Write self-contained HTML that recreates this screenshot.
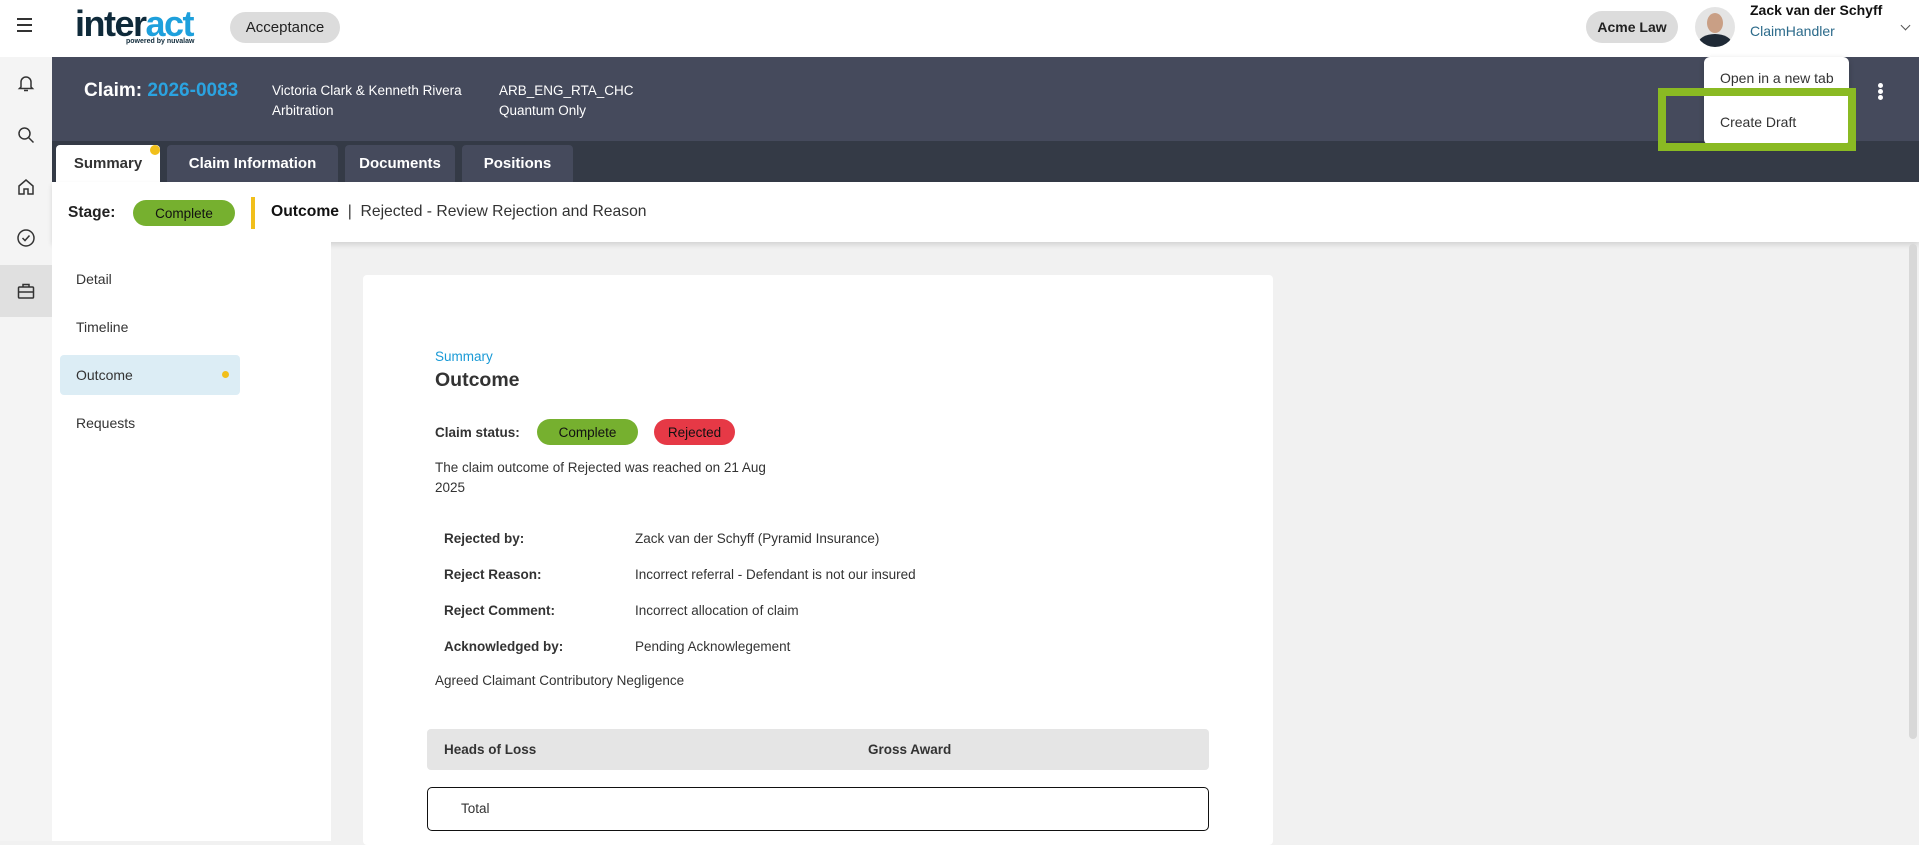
<!DOCTYPE html>
<html><head><meta charset="utf-8"><style>
*{box-sizing:border-box;margin:0;padding:0}
body{width:1919px;height:841px;overflow:hidden;font-family:"Liberation Sans",sans-serif;background:#f1f1f1;position:relative;color:#222}
.a{position:absolute;white-space:nowrap}
.pill{position:absolute;border-radius:16px;display:flex;align-items:center;justify-content:center}
</style></head><body>
<!-- top bar -->
<div class="a" style="left:0;top:0;width:1919px;height:57px;background:#fff"></div>
<div class="a" style="left:17px;top:18px;width:15px;height:14px;border-top:2px solid #333;border-bottom:2px solid #333"><div style="margin-top:4px;height:2px;background:#333"></div></div>
<div class="a" style="left:75px;top:3px;font-size:36px;font-weight:bold;letter-spacing:-1.5px;color:#0f2a3a">inter<span style="color:#1ea0dc">act</span></div>
<div class="a" style="left:126px;top:38px;font-size:7px;font-weight:bold;color:#0f2a3a">powered by nuvalaw</div>
<div class="pill" style="left:230px;top:12px;width:110px;height:31px;background:#dcdcdc;font-size:15px;color:#222">Acceptance</div>
<div class="pill" style="left:1586px;top:11px;width:92px;height:32px;background:#dcdcdc;font-size:14px;font-weight:bold;color:#222">Acme Law</div>
<div class="a" style="left:1695px;top:7px;width:40px;height:40px;border-radius:50%;background:#e4e4e4;overflow:hidden"><div style="position:absolute;left:12px;top:6px;width:16px;height:20px;border-radius:50%;background:#c99f85"></div><div style="position:absolute;left:3px;top:27px;width:34px;height:20px;border-radius:50%;background:#1f2a36"></div></div>
<div class="a" style="left:1750px;top:2px;font-size:14px;font-weight:bold;color:#111">Zack van der Schyff</div>
<div class="a" style="left:1750px;top:23px;font-size:14px;color:#2b6a8a">ClaimHandler</div>
<div class="a" style="left:1902px;top:22px;width:7px;height:7px;border-right:1.5px solid #555;border-bottom:1.5px solid #555;transform:rotate(45deg)"></div>
<!-- sidebar -->
<div class="a" style="left:0;top:57px;width:52px;height:784px;background:#f4f4f4"></div>
<div class="a" style="left:0;top:265px;width:52px;height:52px;background:#e0e0e0"></div>
<svg class="a" style="left:16px;top:73px" width="20" height="20" viewBox="0 0 20 20" fill="none" stroke="#333" stroke-width="1.5"><path d="M5 14V9a5 5 0 0110 0v5l1.5 1.5h-13z M8 17.5h4"/></svg>
<svg class="a" style="left:16px;top:125px" width="20" height="20" viewBox="0 0 20 20" fill="none" stroke="#333" stroke-width="1.5"><circle cx="8.5" cy="8.5" r="5.5"/><path d="M12.5 12.5l5 5"/></svg>
<svg class="a" style="left:16px;top:177px" width="20" height="20" viewBox="0 0 20 20" fill="none" stroke="#333" stroke-width="1.5"><path d="M3 9l7-6 7 6v8h-5v-5h-4v5H3z"/></svg>
<svg class="a" style="left:16px;top:228px" width="20" height="20" viewBox="0 0 20 20" fill="none" stroke="#333" stroke-width="1.5"><circle cx="10" cy="10" r="8"/><path d="M6.5 10l2.5 2.5 4.5-5"/></svg>
<svg class="a" style="left:16px;top:281px" width="20" height="20" viewBox="0 0 20 20" fill="none" stroke="#333" stroke-width="1.5"><rect x="2.5" y="6" width="15" height="11" rx="1"/><path d="M7 6V3.5h6V6 M2.5 11h15"/></svg>
<!-- dark header -->
<div class="a" style="left:52px;top:57px;width:1867px;height:84px;background:#454a5c"></div>
<div class="a" style="left:52px;top:141px;width:1867px;height:41px;background:#343a46"></div>
<div class="a" style="left:84px;top:80px;font-size:19px;font-weight:bold;color:#fff">Claim: <span style="color:#2ba3e0">2026-0083</span></div>
<div class="a" style="left:272px;top:81px;font-size:13.5px;color:#fff;line-height:20px">Victoria Clark &amp; Kenneth Rivera<br>Arbitration</div>
<div class="a" style="left:499px;top:81px;font-size:13.5px;color:#fff;line-height:20px">ARB_ENG_RTA_CHC<br>Quantum Only</div>
<div class="a" style="left:56px;top:145px;width:104px;height:37px;background:#fff;border-radius:4px 4px 0 0;font-size:15px;font-weight:bold;color:#333;display:flex;align-items:center;justify-content:center">Summary</div>
<div class="a" style="left:150px;top:145px;width:10px;height:10px;border-radius:50%;background:#f1bf1b"></div>
<div class="a" style="left:167px;top:145px;width:171px;height:37px;background:#454a5c;border-radius:4px 4px 0 0;font-size:15px;font-weight:bold;color:#fff;display:flex;align-items:center;justify-content:center">Claim Information</div>
<div class="a" style="left:345px;top:145px;width:110px;height:37px;background:#454a5c;border-radius:4px 4px 0 0;font-size:15px;font-weight:bold;color:#fff;display:flex;align-items:center;justify-content:center">Documents</div>
<div class="a" style="left:462px;top:145px;width:111px;height:37px;background:#454a5c;border-radius:4px 4px 0 0;font-size:15px;font-weight:bold;color:#fff;display:flex;align-items:center;justify-content:center">Positions</div>
<!-- kebab -->
<div class="a" style="left:1878px;top:83px;width:5px;height:5px;border-radius:50%;background:#fff;box-shadow:0 6px 0 #fff,0 12px 0 #fff"></div>
<!-- dropdown -->
<div class="a" style="left:1704px;top:57px;width:145px;height:88px;background:#fff;border-radius:6px;box-shadow:0 2px 6px rgba(0,0,0,.2)"></div>
<div class="a" style="left:1720px;top:70px;font-size:14px;color:#333">Open in a new tab</div>
<div class="a" style="left:1720px;top:114px;font-size:14px;color:#333">Create Draft</div>
<div class="a" style="left:1658px;top:88px;width:198px;height:63px;border:8px solid #8aba23"></div>
<!-- stage bar -->
<div class="a" style="left:52px;top:182px;width:1867px;height:60px;background:#fff;box-shadow:0 3px 5px rgba(0,0,0,.12)"></div>
<div class="a" style="left:68px;top:204px;font-size:15.5px;font-weight:bold;color:#222">Stage:</div>
<div class="pill" style="left:133px;top:200px;width:102px;height:26px;background:#76b02f;font-size:13.5px;color:#111">Complete</div>
<div class="a" style="left:251px;top:197px;width:4px;height:32px;background:#f1bf1b"></div>
<div class="a" style="left:271px;top:203px;font-size:15.7px;color:#333"><b style="color:#111">Outcome</b> &nbsp;| &nbsp;Rejected - Review Rejection and Reason</div>
<!-- left nav -->
<div class="a" style="left:52px;top:242px;width:279px;height:599px;background:#fff"></div>
<div class="a" style="left:76px;top:271px;font-size:14px;color:#333">Detail</div>
<div class="a" style="left:76px;top:319px;font-size:14px;color:#333">Timeline</div>
<div class="a" style="left:60px;top:355px;width:180px;height:40px;background:#dcedf5;border-radius:4px"></div>
<div class="a" style="left:76px;top:367px;font-size:14px;color:#333">Outcome</div>
<div class="a" style="left:222px;top:371px;width:7px;height:7px;border-radius:50%;background:#f1bf1b"></div>
<div class="a" style="left:76px;top:415px;font-size:14px;color:#333">Requests</div>
<!-- card -->
<div class="a" style="left:363px;top:275px;width:910px;height:570px;background:#fff;border-radius:4px"></div>
<div class="a" style="left:435px;top:349px;font-size:13.5px;color:#1a9ad6">Summary</div>
<div class="a" style="left:435px;top:369px;font-size:19.5px;font-weight:bold;color:#333">Outcome</div>
<div class="a" style="left:435px;top:425px;font-size:13.5px;font-weight:bold;color:#333">Claim status:</div>
<div class="pill" style="left:537px;top:419px;width:101px;height:26px;background:#76b02f;font-size:13.5px;color:#111">Complete</div>
<div class="pill" style="left:654px;top:419px;width:81px;height:26px;background:#e63946;font-size:13.5px;color:#111">Rejected</div>
<div class="a" style="left:435px;top:458px;font-size:13.5px;color:#333;line-height:20px">The claim outcome of Rejected was reached on 21 Aug<br>2025</div>
<div class="a" style="left:444px;top:521px;font-size:13.5px;font-weight:bold;color:#333;line-height:36px">Rejected by:<br>Reject Reason:<br>Reject Comment:<br>Acknowledged by:</div>
<div class="a" style="left:635px;top:521px;font-size:13.5px;color:#333;line-height:36px">Zack van der Schyff (Pyramid Insurance)<br>Incorrect referral - Defendant is not our insured<br>Incorrect allocation of claim<br>Pending Acknowlegement</div>
<div class="a" style="left:435px;top:673px;font-size:13.5px;color:#333">Agreed Claimant Contributory Negligence</div>
<div class="a" style="left:427px;top:729px;width:782px;height:41px;background:#e5e5e5;border-radius:4px"></div>
<div class="a" style="left:444px;top:742px;font-size:13.5px;font-weight:bold;color:#333">Heads of Loss</div>
<div class="a" style="left:868px;top:742px;font-size:13.5px;font-weight:bold;color:#333">Gross Award</div>
<div class="a" style="left:427px;top:787px;width:782px;height:44px;border:1.5px solid #111;border-radius:5px"></div>
<div class="a" style="left:461px;top:801px;font-size:13.5px;color:#333">Total</div>
<!-- scrollbar -->
<div class="a" style="left:1909px;top:244px;width:8px;height:495px;background:#d8d8d8;border-radius:4px"></div>
</body></html>
